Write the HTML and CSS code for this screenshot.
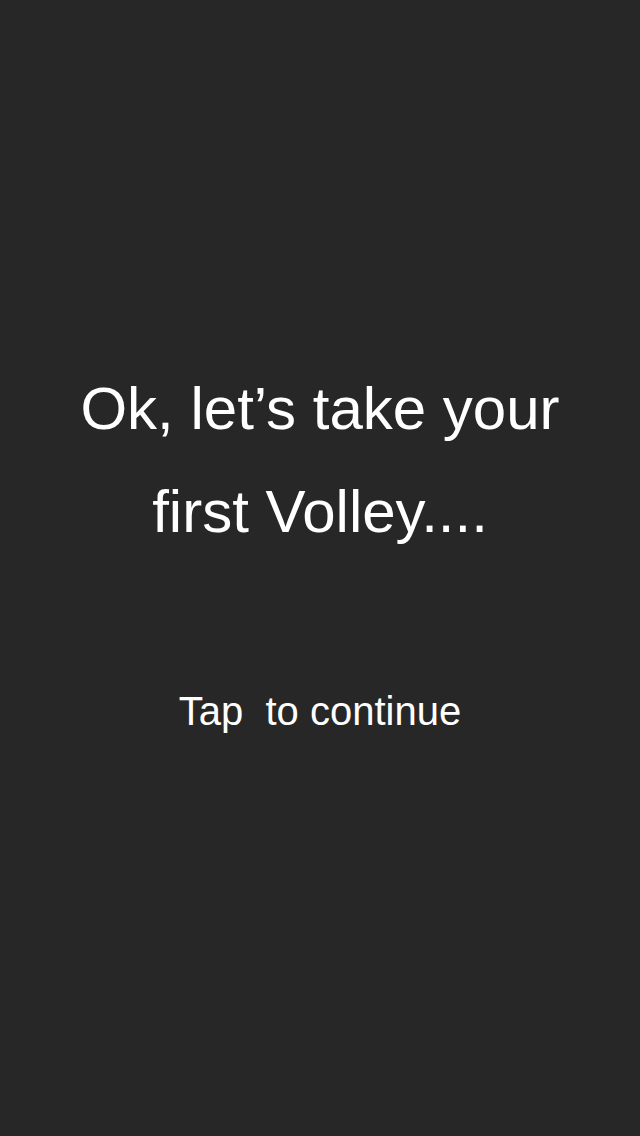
FILE: index.html
```html
<!DOCTYPE html>
<html>
<head>
<meta charset="utf-8">
<link rel="stylesheet" href="styles.css">
</head>
<body>
<main class="screen">
  <h1 class="title">Ok, let’s take your<br>first Volley....</h1>
  <p class="hint">Tap  to continue</p>
</main>
</body>
</html>
```
FILE: styles.css
```css
html, body {
  margin: 0;
  padding: 0;
  background: #272727;
}
.screen {
  width: 640px;
  height: 1136px;
  box-sizing: border-box;
  padding-top: 357px;
  display: flex;
  flex-direction: column;
  align-items: center;
  color: #ffffff;
  font-family: "Liberation Sans", Arial, sans-serif;
}
.title {
  margin: 0;
  font-size: 60px;
  font-weight: 400;
  line-height: 103px;
  text-align: center;
}
.hint {
  margin: 124px 0 0;
  font-size: 40px;
  line-height: 48px;
  white-space: pre;
}
```
